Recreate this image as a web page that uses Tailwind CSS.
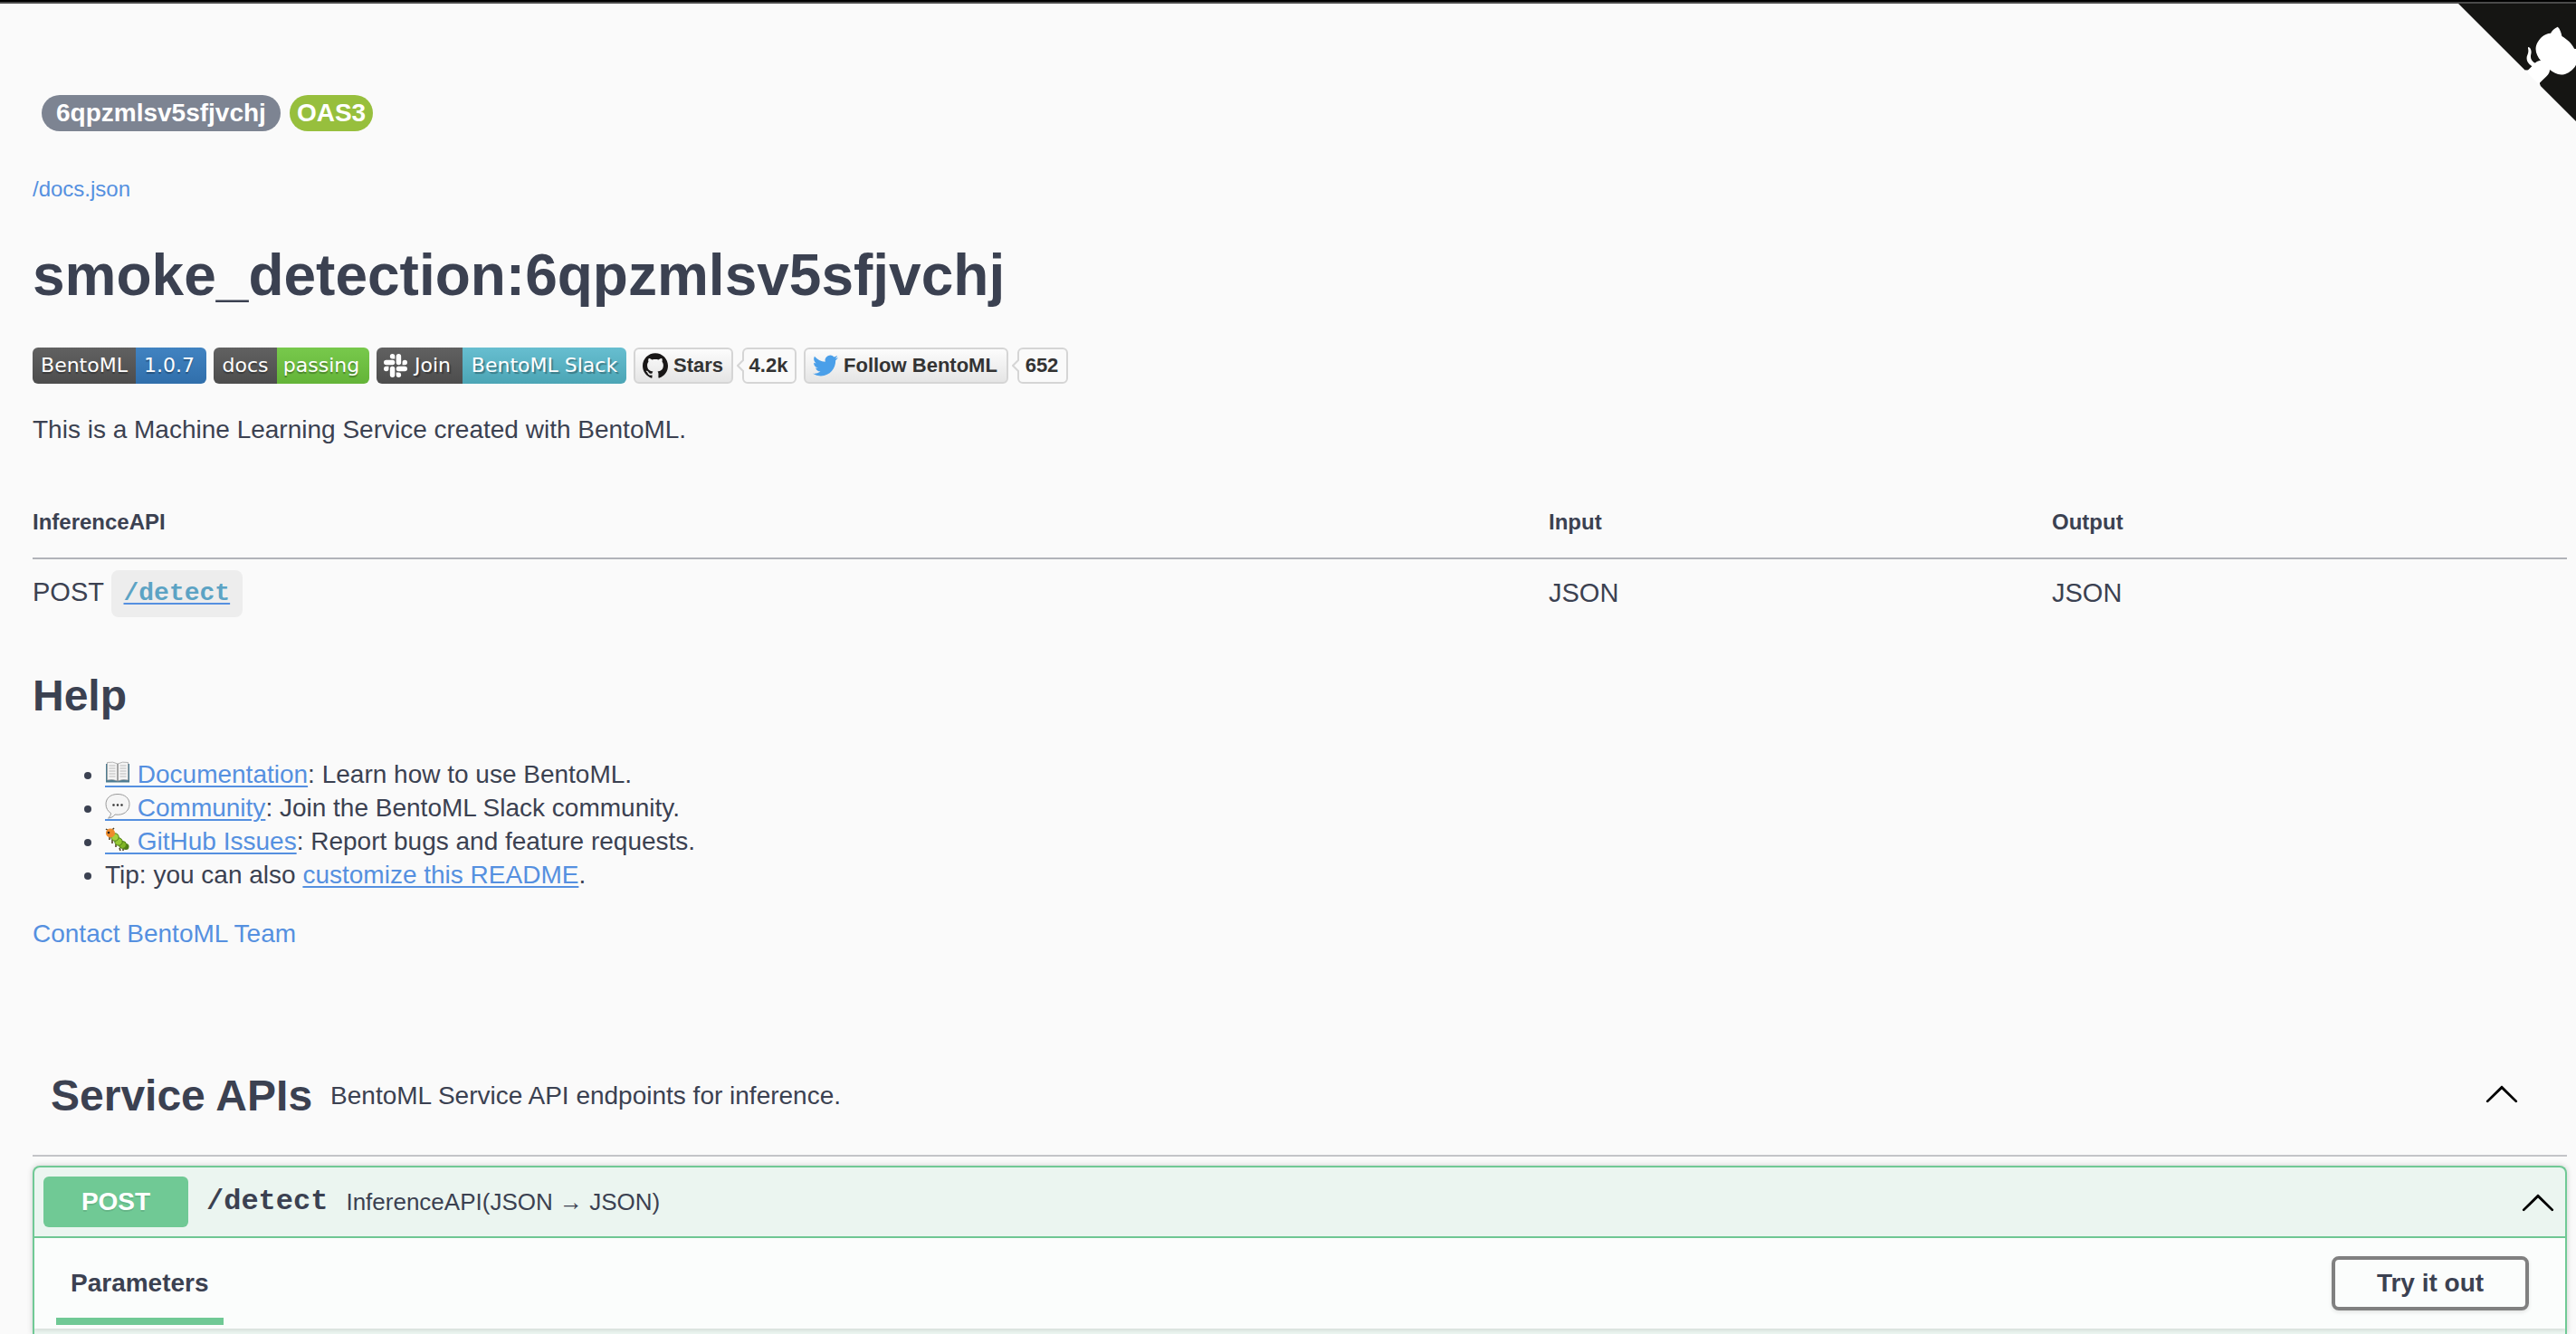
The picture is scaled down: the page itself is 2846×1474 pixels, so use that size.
<!DOCTYPE html>
<html lang="en">
<head>
<meta charset="utf-8">
<title>BentoML Prediction Service</title>
<script src="https://cdn.jsdelivr.net/npm/@tailwindcss/browser@4"></script>
</head>
<body class="relative min-h-screen overflow-x-hidden bg-[#fafafa] font-['Liberation_Sans',Arial,sans-serif] text-[28px] leading-8 text-[#3b4151]">
<div class="h-0.5 bg-black"></div>
<div class="h-0.5 bg-[#4a4a4a]"></div>

<a href="#github" aria-label="View source on GitHub" class="absolute top-1 right-0 h-40 w-[130px] overflow-hidden">
  <svg class="size-40" viewBox="0 0 250 250">
    <path fill="#151513" d="M0,0 L115,115 L130,115 L142,142 L250,250 L250,0 Z"/>
    <path fill="#fff" d="M128.3,109.0 C113.8,99.7 119.0,89.6 119.0,89.6 C122.0,82.7 120.5,78.6 120.5,78.6 C119.2,72.0 123.4,76.3 123.4,76.3 C127.3,80.9 125.5,87.3 125.5,87.3 C122.9,97.6 130.6,101.9 134.4,103.2"/>
    <path fill="#fff" d="M115.0,115.0 C114.9,115.1 118.7,116.5 119.8,115.4 L133.7,101.6 C136.9,99.2 139.9,98.4 142.2,98.6 C133.8,88.0 127.5,74.4 143.8,58.0 C148.5,53.4 154.0,51.2 159.7,51.0 C160.3,49.4 163.2,43.6 171.4,40.1 C171.4,40.1 176.1,42.5 178.8,56.2 C183.1,58.6 187.2,61.8 190.9,65.4 C194.5,69.0 197.7,73.2 200.1,77.6 C213.8,80.2 216.3,84.9 216.3,84.9 C212.7,93.1 206.9,96.0 205.4,96.6 C205.1,102.4 203.0,107.8 198.3,112.5 C181.9,128.9 168.3,122.5 157.7,114.1 C157.9,116.9 156.7,120.9 152.7,124.9 L141.0,136.5 C139.8,137.7 141.6,141.9 141.8,141.8 Z"/>
  </svg>
</a>

<main class="pr-2.5 pl-9">
  <header class="pt-[101px]">
    <div class="flex gap-2.5 pl-2.5 font-bold text-white">
      <span class="h-10 rounded-[20px] bg-[#7d8492] px-4 leading-10">6qpzmlsv5sfjvchj</span>
      <span class="h-10 rounded-[20px] bg-[#97bf3d] px-2 leading-10">OAS3</span>
    </div>
    <a href="#docs" class="mt-12 block w-fit text-2xl leading-8 text-[#5590e0]">/docs.json</a>
    <h1 class="mt-[41px] text-[64px] leading-[76px] font-bold">smoke_detection:6qpzmlsv5sfjvchj</h1>

    <div class="mt-[42px] flex h-10 gap-2 font-['DejaVu_Sans',sans-serif] text-[22px] leading-10 text-white">
      <a href="#pypi" class="flex overflow-hidden rounded-md text-shadow-[0_2px_1px_rgb(0_0_0/0.3)]">
        <span class="w-[114px] bg-linear-to-b from-[#616161] to-[#4d4d4d] text-center">BentoML</span>
        <span class="w-[78px] bg-linear-to-b from-[#4183c1] to-[#306fab] pr-1 text-center">1.0.7</span>
      </a>
      <a href="#guide" class="flex overflow-hidden rounded-md text-shadow-[0_2px_1px_rgb(0_0_0/0.3)]">
        <span class="w-[70px] bg-linear-to-b from-[#616161] to-[#4d4d4d] text-center">docs</span>
        <span class="w-[102px] bg-linear-to-b from-[#78c94c] to-[#64b438] pr-1 text-center">passing</span>
      </a>
      <a href="#slack" class="flex overflow-hidden rounded-md text-shadow-[2px_2px_1px_rgb(0_0_0/0.3)]">
        <span class="flex w-[95px] items-center gap-2 bg-linear-to-b from-[#616161] to-[#4d4d4d] pl-2">
          <svg class="size-[26px]" viewBox="0 0 24 24" fill="#fff"><path d="M5.042 15.165a2.528 2.528 0 0 1-2.52 2.523A2.528 2.528 0 0 1 0 15.165a2.527 2.527 0 0 1 2.522-2.52h2.52v2.52zM6.313 15.165a2.527 2.527 0 0 1 2.521-2.52 2.527 2.527 0 0 1 2.521 2.52v6.313A2.528 2.528 0 0 1 8.834 24a2.528 2.528 0 0 1-2.521-2.522v-6.313zM8.834 5.042a2.528 2.528 0 0 1-2.521-2.52A2.528 2.528 0 0 1 8.834 0a2.528 2.528 0 0 1 2.521 2.522v2.52H8.834zM8.834 6.313a2.528 2.528 0 0 1 2.521 2.521 2.528 2.528 0 0 1-2.521 2.521H2.522A2.528 2.528 0 0 1 0 8.834a2.528 2.528 0 0 1 2.522-2.521h6.312zM18.956 8.834a2.528 2.528 0 0 1 2.522-2.521A2.528 2.528 0 0 1 24 8.834a2.528 2.528 0 0 1-2.522 2.521h-2.522V8.834zM17.688 8.834a2.528 2.528 0 0 1-2.523 2.521 2.527 2.527 0 0 1-2.52-2.521V2.522A2.527 2.527 0 0 1 15.165 0a2.528 2.528 0 0 1 2.523 2.522v6.312zM15.165 18.956a2.528 2.528 0 0 1 2.523 2.522A2.528 2.528 0 0 1 15.165 24a2.527 2.527 0 0 1-2.52-2.522v-2.522h2.52zM15.165 17.688a2.527 2.527 0 0 1-2.52-2.523 2.526 2.526 0 0 1 2.52-2.52h6.313A2.527 2.527 0 0 1 24 15.165a2.528 2.528 0 0 1-2.522 2.523h-6.313z"/></svg>
          <span>Join</span>
        </span>
        <span class="w-[181px] bg-linear-to-b from-[#67bed0] to-[#4ba5b5] text-center">BentoML Slack</span>
      </a>
      <div class="flex gap-2.5 font-['Liberation_Sans',Arial,sans-serif] text-[22px] leading-9 font-bold text-[#333]">
        <a href="#stars" class="flex w-[110px] items-center gap-1.5 rounded-md border-2 border-[#d5d5d5] bg-linear-to-b from-[#fcfcfc] to-[#e5e5e5] pl-2">
          <svg class="size-7" viewBox="0 0 24 24" fill="#191717"><path d="M12 .297c-6.63 0-12 5.373-12 12 0 5.303 3.438 9.8 8.205 11.385.6.113.82-.258.82-.577 0-.285-.01-1.04-.015-2.04-3.338.724-4.042-1.61-4.042-1.61C4.422 18.07 3.633 17.7 3.633 17.7c-1.087-.744.084-.729.084-.729 1.205.084 1.838 1.236 1.838 1.236 1.07 1.835 2.809 1.305 3.495.998.108-.776.417-1.305.76-1.605-2.665-.3-5.466-1.332-5.466-5.93 0-1.31.465-2.38 1.235-3.22-.135-.303-.54-1.523.105-3.176 0 0 1.005-.322 3.3 1.23.96-.267 1.98-.399 3-.405 1.02.006 2.04.138 3 .405 2.28-1.552 3.285-1.23 3.285-1.23.645 1.653.24 2.873.12 3.176.765.84 1.23 1.91 1.23 3.22 0 4.61-2.805 5.625-5.475 5.92.42.36.81 1.096.81 2.22 0 1.606-.015 2.896-.015 3.286 0 .315.21.69.825.57C20.565 22.092 24 17.592 24 12.297c0-6.627-5.373-12-12-12"/></svg>
          <span>Stars</span>
        </a>
        <a href="#stargazers" class="relative w-[60px] rounded-md border-2 border-[#d5d5d5] bg-[#fafafa] pr-0.5 text-center">4.2k
          <svg class="absolute top-[11px] -left-2 h-3.5 w-2" viewBox="0 0 8 14"><path fill="#fafafa" stroke="#d5d5d5" stroke-width="2" d="M8 0 1 7l7 7"/></svg>
        </a>
      </div>
      <div class="flex gap-2.5 font-['Liberation_Sans',Arial,sans-serif] text-[22px] leading-9 font-bold text-[#333]">
        <a href="#twitter" class="flex w-[226px] items-center gap-1.5 rounded-md border-2 border-[#d5d5d5] bg-linear-to-b from-[#fcfcfc] to-[#e5e5e5] pl-2">
          <svg class="size-7" viewBox="0 0 24 24" fill="#4a9fe9"><path d="M23.953 4.57a10 10 0 01-2.825.775 4.958 4.958 0 002.163-2.723c-.951.555-2.005.959-3.127 1.184a4.92 4.92 0 00-8.384 4.482C7.69 8.095 4.067 6.13 1.64 3.162a4.822 4.822 0 00-.666 2.475c0 1.71.87 3.213 2.188 4.096a4.904 4.904 0 01-2.228-.616v.06a4.923 4.923 0 003.946 4.827 4.996 4.996 0 01-2.212.085 4.936 4.936 0 004.604 3.417 9.867 9.867 0 01-6.102 2.105c-.39 0-.779-.023-1.17-.067a13.995 13.995 0 007.557 2.209c9.053 0 13.998-7.496 13.998-13.985 0-.21 0-.42-.015-.63A9.935 9.935 0 0024 4.59z"/></svg>
          <span>Follow BentoML</span>
        </a>
        <a href="#followers" class="relative w-14 rounded-md border-2 border-[#d5d5d5] bg-[#fafafa] pr-0.5 text-center">652
          <svg class="absolute top-[11px] -left-2 h-3.5 w-2" viewBox="0 0 8 14"><path fill="#fafafa" stroke="#d5d5d5" stroke-width="2" d="M8 0 1 7l7 7"/></svg>
        </a>
      </div>
    </div>

    <p class="mt-[35px]">This is a Machine Learning Service created with BentoML.</p>

    <table class="mt-[70px] w-full text-left">
      <thead>
        <tr class="border-b-2 border-[#b1b3b9] text-2xl leading-8">
          <th class="w-[1675px] pb-[23px]">InferenceAPI</th>
          <th class="w-[556px] pb-[23px]">Input</th>
          <th class="pb-[23px]">Output</th>
        </tr>
      </thead>
      <tbody class="text-[29px] leading-[52px]">
        <tr>
          <td class="pt-2.5">POST <a href="#detect" class="inline-block rounded-lg bg-[#ededed] px-3.5 align-middle font-['Liberation_Mono',monospace] text-[28px] font-bold text-[#5ca3c4] underline decoration-[#5590e0] decoration-2 underline-offset-[3px]">/detect</a></td>
          <td class="pt-2.5">JSON</td>
          <td class="pt-2.5">JSON</td>
        </tr>
      </tbody>
    </table>

    <h2 class="mt-[59px] text-5xl leading-[56px] font-bold">Help</h2>

    <ul class="mt-10 list-disc pl-20 leading-[37px]">
      <li><a href="#documentation" class="text-[#5590e0] underline decoration-2 underline-offset-[3px]"><svg class="inline-block h-8 w-7 align-[-6px]" viewBox="0 0 28 32"><path fill="#4d7c92" d="M1 5h26v20.500H1z"/><path fill="#f4f4f4" stroke="#999" stroke-width=".7" d="M2.500 3.500Q9 2 14 5V24Q9 21.500 2.500 23zM25.500 3.500Q19 2 14 5V24Q19 21.500 25.500 23z"/><path stroke="#bbb" d="M4.500 7h7M4.500 10h7M4.500 13h7M4.500 16h7M4.500 19h7M16.500 7h7M16.500 10h7M16.500 13h7M16.500 16h7M16.500 19h7"/><path stroke="#888" d="M14 5v19"/><path fill="currentColor" d="M0 29h28v2H0z"/></svg> Documentation</a>: Learn how to use BentoML.</li>
      <li><a href="#community" class="text-[#5590e0] underline decoration-2 underline-offset-[3px]"><svg class="inline-block h-8 w-7 align-[-6px]" viewBox="0 0 28 32"><path fill="currentColor" d="M0 29h28v2H0z"/><path fill="#f5f5f5" stroke="#999" d="M14 1.500C6 1.500 1 6 1 12.500c0 4.500 2.200 8 5.500 10C6.500 25 5 26.800 3.500 28c3.500-.3 6-1.700 7.500-4 9 1.500 16-3.500 16-11.500C27 6 22 1.500 14 1.500z"/><path stroke="#333" stroke-width="2.600" stroke-linecap="round" d="M9.500 13.500h.01M14 13.500h.01M18.500 13.500h.01"/></svg> Community</a>: Join the BentoML Slack community.</li>
      <li><a href="#issues" class="text-[#5590e0] underline decoration-2 underline-offset-[3px]"><svg class="inline-block h-8 w-7 align-[-6px]" viewBox="0 0 28 32"><path stroke="#4a3a1c" stroke-width="1.500" fill="none" d="M4 5 1 3M7 5l3-3M5 11l0 4M8 15l0 4M12 20l0 3M16 24l1 3M20 25l0 2"/><circle cx="23" cy="22.500" r="3.500" fill="#4f7d18"/><circle cx="19.500" cy="20.500" r="4" fill="#7fb526" stroke="#4f7d18"/><circle cx="15" cy="17" r="4.200" fill="#94c832" stroke="#4f7d18"/><circle cx="11" cy="12" r="4.200" fill="#a3d23e" stroke="#4f7d18"/><circle cx="6" cy="7.500" r="5" fill="#ee8b2c"/><circle cx="4" cy="7" r="1.300" fill="#222"/><path fill="currentColor" d="M0 29h28v2H0z"/></svg> GitHub Issues</a>: Report bugs and feature requests.</li>
      <li>Tip: you can also <a href="#readme" class="text-[#5590e0] underline decoration-2 underline-offset-[3px]">customize this README</a>.</li>
    </ul>

    <a href="#contact" class="mt-[31px] block w-fit text-[#5590e0]">Contact BentoML Team</a>
  </header>

  <section class="mt-[127px]">
    <div class="flex items-center border-b-2 border-[#c3c4c8] pr-[52px] pb-[29px] pl-5">
      <h3 class="text-5xl leading-[72px] font-bold">Service APIs</h3>
      <p class="pl-5">BentoML Service API endpoints for inference.</p>
      <button type="button" aria-label="Collapse section" class="mb-1.5 ml-auto"><svg class="size-10" viewBox="0 0 20 20"><path d="M17.418 14.908C17.69 15.176 18.127 15.176 18.397 14.908C18.667 14.64 18.668 14.207 18.397 13.939L10.489 6.109C10.219 5.841 9.782 5.841 9.51 6.109L1.602 13.939C1.332 14.207 1.332 14.64 1.602 14.908C1.873 15.176 2.311 15.176 2.581 14.908L10 7.767L17.418 14.908Z"/></svg></button>
    </div>

    <article class="mt-2.5 h-[186px] overflow-hidden rounded-t-lg border-2 border-b-0 border-[#70c995] bg-[#ebf5f0] shadow-[0_0_6px_rgb(0_0_0/0.19)]">
      <div class="flex items-center border-b-2 border-[#70c995] p-2.5">
        <button type="button" class="h-14 w-40 rounded-md bg-[#70c995] font-bold text-white text-shadow-[0_2px_0_rgb(0_0_0/0.1)]">POST</button>
        <a href="#detect" class="pl-5 font-['Liberation_Mono',monospace] text-[32px] leading-10 font-bold">/detect</a>
        <span class="pl-5 text-[26px]">InferenceAPI(JSON → JSON)</span>
        <button type="button" aria-label="Collapse operation" class="ml-auto"><svg class="size-10" viewBox="0 0 20 20"><path d="M17.418 14.908C17.69 15.176 18.127 15.176 18.397 14.908C18.667 14.64 18.668 14.207 18.397 13.939L10.489 6.109C10.219 5.841 9.782 5.841 9.51 6.109L1.602 13.939C1.332 14.207 1.332 14.64 1.602 14.908C1.873 15.176 2.311 15.176 2.581 14.908L10 7.767L17.418 14.908Z"/></svg></button>
      </div>
      <div class="flex h-[100px] items-center justify-between bg-[#fbfdfc] pr-10 pl-6 shadow-[0_2px_4px_rgb(0_0_0/0.1)]">
        <h4 class="mb-1 self-end border-b-8 border-[#70c995] px-4 pb-5 leading-9 font-bold">Parameters</h4>
        <button type="button" class="h-[60px] w-[218px] rounded-lg border-4 border-[#808080] font-bold shadow-[0_2px_4px_rgb(0_0_0/0.1)]">Try it out</button>
      </div>
    </article>
  </section>
</main>
</body>
</html>
